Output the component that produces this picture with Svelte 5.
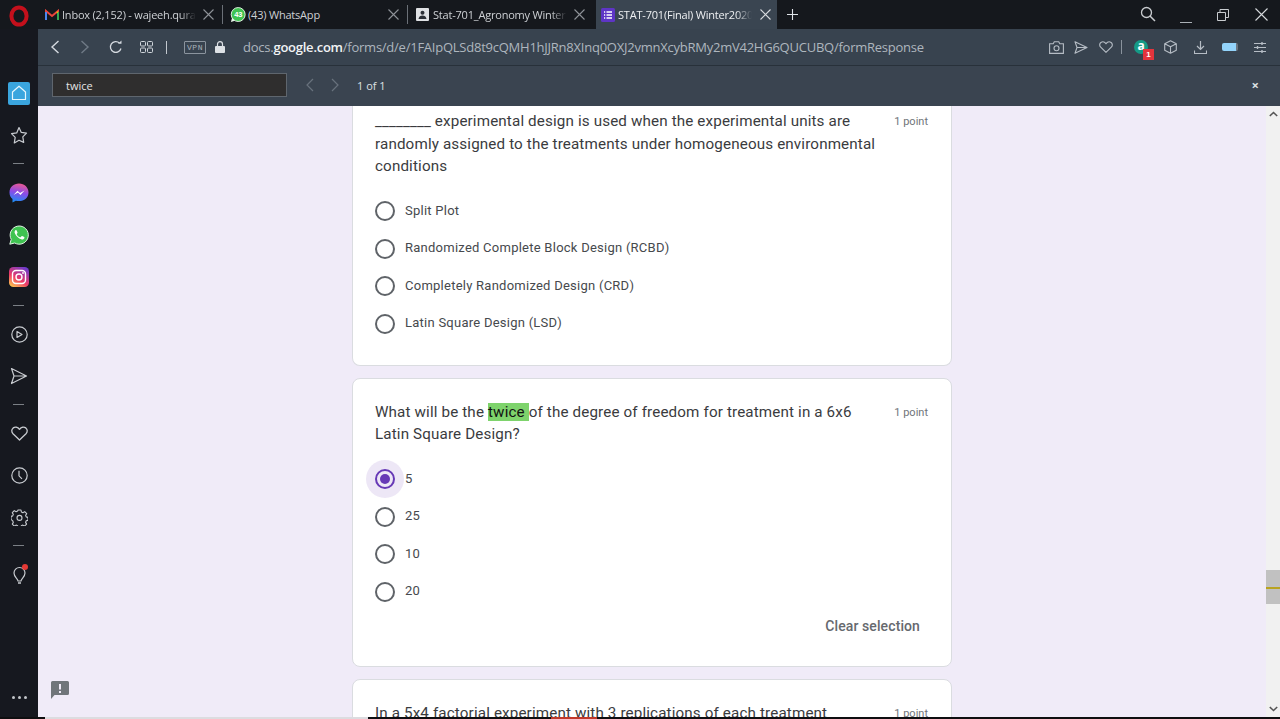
<script>
  const tabs = [
    { id: "gmail", title: "Inbox (2,152) - wajeeh.qura" },
    { id: "wa", title: "(43) WhatsApp", full: true },
    { id: "drive", title: "Stat-701_Agronomy Winter" },
    { id: "form", title: "STAT-701(Final) Winter2020", active: true },
  ];

  const questions = [
    {
      parts: ["________ experimental design is used when the experimental units are randomly assigned to the treatments under homogeneous environmental conditions"],
      options: [
        "Split Plot",
        "Randomized Complete Block Design (RCBD)",
        "Completely Randomized Design (CRD)",
        "Latin Square Design (LSD)",
      ],
      first: true,
    },
    {
      parts: ["What will be the ", "twice ", "of the degree of freedom for treatment in a 6x6 Latin Square Design?"],
      options: ["5", "25", "10", "20"],
      selected: 0,
    },
    {
      parts: ["In a 5x4 factorial experiment with 3 replications of each treatment"],
      options: [],
    },
  ];
</script>

<div class="browser">
  <header class="tabstrip">
    <div class="logo">
      <svg width="20" height="22" viewBox="0 0 20 22"><ellipse cx="10" cy="11" rx="7.6" ry="8.6" fill="none" stroke="#c4101c" stroke-width="4"/></svg>
    </div>
    {#each tabs as tab}
      <div class="tab {tab.id}" class:active={tab.active}>
        <span class="favicon">
          {#if tab.id === "gmail"}
            <svg width="14" height="12" viewBox="0 0 14 12"><path d="M1 11V2l6 5 6-5v9" fill="none" stroke="#e8453c" stroke-width="2"/><path d="M1 11V3" stroke="#4a87f0" stroke-width="2"/><path d="M13 11V3" stroke="#34a853" stroke-width="2"/><path d="M11 3.500 13 2v2z" fill="#fbbc04"/></svg>
          {:else if tab.id === "wa"}
            <svg width="16" height="16" viewBox="0 0 17 17"><circle cx="8.700" cy="8" r="7.400" fill="#3fc351" stroke="#e8f5e9" stroke-width="1"/><path d="M1 16l1.200-4.500 3 3z" fill="#e8f5e9"/><text x="8.700" y="10.600" text-anchor="middle" class="wa-count">43</text></svg>
          {:else if tab.id === "drive"}
            <svg width="13" height="13" viewBox="0 0 13 13"><rect width="13" height="13" rx="1" fill="#dfe1e4"/><circle cx="6.500" cy="4.800" r="2" fill="#2b2f36"/><path d="M2.500 11c.3-2.600 2-3.600 4-3.600s3.700 1 4 3.600z" fill="#2b2f36"/></svg>
          {:else}
            <svg width="14" height="14" viewBox="0 0 14 14"><rect width="14" height="14" rx="1.500" fill="#5e35c5"/><path d="M3 4h1.200M5.500 4H11M3 7h1.200M5.500 7H11M3 10h1.200M5.500 10H11" stroke="#fff" stroke-width="1.400"/></svg>
          {/if}
        </span>
        <span class="tab-title" class:full={tab.full}>{tab.title}</span>
        <svg class="tab-x" width="11" height="11" viewBox="0 0 11 11"><path d="M.5.5l10 10M10.500.5l-10 10" stroke="currentColor" stroke-width="1.100"/></svg>
      </div>
    {/each}
    <svg class="plus" width="11" height="11" viewBox="0 0 11 11"><path d="M5.500 0v11M0 5.500h11" stroke="#dfe3e8" stroke-width="1.100"/></svg>
    <div class="win-controls">
      <svg class="win-search" width="16" height="16" viewBox="0 0 16 16"><circle cx="6.500" cy="6.500" r="5" fill="none" stroke="#c9ccd0" stroke-width="1.300"/><path d="M10 10l5 5" stroke="#c9ccd0" stroke-width="1.500"/></svg>
      <svg class="win-min" width="12" height="12" viewBox="0 0 12 12"><path d="M0 11.500h12" stroke="#aab0b6"/></svg>
      <svg class="win-max" width="12" height="12" viewBox="0 0 12 12"><path d="M.5 3.500h8v8h-8zM3 3.500V.5h8.500v8h-3" fill="none" stroke="#c9ccd0"/></svg>
      <svg class="win-close" width="13" height="13" viewBox="0 0 13 13"><path d="M.5.5l12 12M12.500.5l-12 12" stroke="#d5d8dc" stroke-width="1.100"/></svg>
    </div>
  </header>

  <nav class="sidebar">
    <div class="side-item">
      <span class="home">
        <svg width="16" height="16" viewBox="0 0 16 16"><path d="M1.500 7L8 1.200 14.500 7v7.500h-13z" fill="none" stroke="#e6f6fd" stroke-width="1.200" stroke-linejoin="round"/></svg>
      </span>
    </div>
    <div class="side-item">
      <svg width="18" height="18" viewBox="0 0 18 18"><path d="M9 1.500l2.300 4.900 5.200.7-3.700 3.800.9 5.500L9 14.200l-4.700 2.700.9-5.500-3.700-3.800 5.200-.7z" fill="none" stroke="#c8cbd0" stroke-width="1.200" stroke-linejoin="round"/></svg>
    </div>
    <div class="side-dash wide"></div>
    <div class="side-item">
      <svg width="20" height="20" viewBox="0 0 20 20">
        <defs><linearGradient id="msg" x1="0.500" y1="1" x2="0.700" y2="0"><stop offset="0" stop-color="#1f8cf5"/><stop offset="0.500" stop-color="#8a4be8"/><stop offset="1" stop-color="#ee5a8e"/></linearGradient></defs>
        <path d="M10 .5C4.600.5.500 4.300.500 9.400c0 2.700 1.100 5 3 6.500v3.600l3.300-1.800c1 .3 2.100.4 3.200.4 5.400 0 9.500-3.800 9.500-8.700S15.400.5 10 .5z" fill="url(#msg)"/>
        <path d="M4.500 12l4-4.300 2.500 2.300 4.500-2.400-4 4.300-2.500-2.300z" fill="#fff"/>
      </svg>
    </div>
    <div class="side-item">
      <svg width="20" height="20" viewBox="0 0 20 20">
        <path d="M.8 19.200l1.400-4.800A9.100 9.100 0 1 1 5.700 18z" fill="#3fc351" stroke="#dff3e2" stroke-width="1"/>
        <path d="M6.900 4.900c-.7.300-1.500 1.300-1.300 2.700.3 2 3.900 6.500 7.300 6.900 1.300.1 2.300-.8 2.500-1.600.1-.5 0-.8-.2-.9l-2-1c-.3-.1-.5 0-.7.200l-.8 1c-.2.200-.4.200-.7.100-1.300-.5-2.500-1.600-3.200-2.900-.1-.3-.1-.4.100-.6l.6-.8c.1-.2.100-.4 0-.6l-.8-1.900c-.2-.4-.5-.6-.8-.6z" fill="#fff"/>
      </svg>
    </div>
    <div class="side-item">
      <svg width="20" height="20" viewBox="0 0 20 20">
        <defs><linearGradient id="ig" x1="0.200" y1="1" x2="0.800" y2="0"><stop offset="0" stop-color="#fdc150"/><stop offset="0.400" stop-color="#ee3a67"/><stop offset="1" stop-color="#6a3bd0"/></linearGradient></defs>
        <rect width="20" height="20" rx="4.500" fill="url(#ig)"/>
        <rect x="3.500" y="3.500" width="13" height="13" rx="3.500" fill="none" stroke="#fff" stroke-width="1.400"/>
        <circle cx="10" cy="10" r="3" fill="none" stroke="#fff" stroke-width="1.400"/>
        <circle cx="14" cy="6" r=".9" fill="#fff"/>
      </svg>
    </div>
    <div class="side-dash"></div>
    <div class="side-item">
      <svg width="17" height="17" viewBox="0 0 17 17"><circle cx="8.500" cy="8.500" r="7.700" fill="none" stroke="#c8cbd0" stroke-width="1.200"/><path d="M6 5.500v6l5-3z" fill="none" stroke="#c8cbd0" stroke-width="1.200" stroke-linejoin="round"/></svg>
    </div>
    <div class="side-item">
      <svg width="18" height="18" viewBox="0 0 18 18"><path d="M1.500 1.500L16.500 9 1.500 16.500 4 9zM4 9h12" fill="none" stroke="#c8cbd0" stroke-width="1.200" stroke-linejoin="round"/></svg>
    </div>
    <div class="side-dash"></div>
    <div class="side-item">
      <svg width="17" height="15" viewBox="0 0 17 15"><path d="M8.500 14L2 7.700C.2 5.800.5 3.200 2.200 1.900c1.800-1.300 4.500-1 6.300 1.400 1.800-2.400 4.500-2.700 6.300-1.400 1.700 1.300 2 3.900.2 5.800z" fill="none" stroke="#c8cbd0" stroke-width="1.300" stroke-linejoin="round"/></svg>
    </div>
    <div class="side-item">
      <svg width="17" height="17" viewBox="0 0 17 17"><circle cx="8.500" cy="8.500" r="7.700" fill="none" stroke="#c8cbd0" stroke-width="1.200"/><path d="M8 3.800v5l3 3" fill="none" stroke="#c8cbd0" stroke-width="1.200"/></svg>
    </div>
    <div class="side-item">
      <svg width="17" height="17" viewBox="0 0 17 17"><path d="M7 1h3l.4 2 1.500.7 1.800-1.100 2 2.100-1.100 1.700.6 1.500 1.800.5v3l-1.800.4-.6 1.600 1 1.700-2 2-1.700-1-1.600.6-.4 1.900H7l-.4-1.900-1.600-.6-1.700 1-2-2 1-1.700-.6-1.600L0 10.400v-3l1.700-.5.600-1.500-1-1.700 2-2.100 1.800 1.100 1.500-.7z" fill="none" stroke="#c8cbd0" stroke-width="1.100" stroke-linejoin="round"/><circle cx="8.500" cy="8.900" r="2.500" fill="none" stroke="#c8cbd0" stroke-width="1.100"/></svg>
    </div>
    <div class="side-dash wide"></div>
    <div class="side-item">
      <svg class="bulb" width="18" height="22" viewBox="0 0 18 22"><path d="M7 18c-.3-2.500-4-4-4-8a5.500 5.500 0 0 1 11 0c0 4-3.700 5.500-4 8z" fill="none" stroke="#c8cbd0" stroke-width="1.200"/><path d="M7 20h3" stroke="#c8cbd0" stroke-width="1.500"/><circle cx="14" cy="4" r="3" fill="#e53935"/></svg>
    </div>
    <div class="side-more">
      <span></span><span></span><span></span>
    </div>
  </nav>

  <div class="toolbar">
    <button class="tool" aria-label="Back"><svg width="10" height="14" viewBox="0 0 10 14"><path d="M8.500 1L2 7l6.500 6" fill="none" stroke="#d5dae0" stroke-width="1.400"/></svg></button>
    <button class="tool dim" aria-label="Forward"><svg width="10" height="14" viewBox="0 0 10 14"><path d="M1.500 1L8 7l-6.500 6" fill="none" stroke="#6f7a86" stroke-width="1.400"/></svg></button>
    <button class="tool reload" aria-label="Reload"><svg width="14" height="14" viewBox="0 0 14 14"><path d="M12 8.500A5.400 5.400 0 1 1 10.500 3" fill="none" stroke="#d5dae0" stroke-width="1.300"/><path d="M9 3.800h3.500V.5z" fill="#d5dae0"/></svg></button>
    <button class="tool" aria-label="Tabs"><svg width="13" height="12" viewBox="0 0 13 12"><g fill="none" stroke="#cfd4da"><rect x=".5" y=".5" width="5" height="4.500" rx="1"/><rect x="7.500" y=".5" width="5" height="4.500" rx="1"/><rect x=".5" y="7" width="5" height="4.500" rx="1"/><rect x="7.500" y="7" width="5" height="4.500" rx="1"/></g></svg></button>
    <span class="tool-sep"></span>
    <span class="vpn">VPN</span>
    <svg class="lock" width="10" height="12" viewBox="0 0 10 12"><path d="M2.500 5.500V3.200a2.500 2.500 0 0 1 5 0v2.300" fill="none" stroke="#dde1e5" stroke-width="1.200"/><rect y="5" width="10" height="7" rx="1" fill="#dde1e5"/></svg>
    <div class="url"><span>docs.</span><b>google.com</b><span>/forms/d/e/1FAIpQLSd8t9cQMH1hJJRn8XInq0OXJ2vmnXcybRMy2mV42HG6QUCUBQ/formResponse</span></div>
    <div class="tool-right">
      <svg width="15" height="13" viewBox="0 0 15 13"><path d="M.6 2.800h3.600L5.300.7h4.400l1.100 2.100h3.600v9.600H.6z" fill="none" stroke="#b6bdc5" stroke-width="1.100"/><circle cx="7.500" cy="7.300" r="2.500" fill="none" stroke="#b6bdc5" stroke-width="1.100"/></svg>
      <svg width="14" height="13" viewBox="0 0 14 13"><path d="M1 .8l12 5.700L1 12.200l2-5.700zM3 6.500h10" fill="none" stroke="#b6bdc5" stroke-width="1.100" stroke-linejoin="round"/></svg>
      <svg class="ic-heart" width="14" height="12" viewBox="0 0 14 12"><path d="M7 11.300L1.700 6.200C.2 4.700.5 2.500 1.900 1.500 3.300.5 5.500.7 7 2.700c1.500-2 3.700-2.200 5.100-1.200 1.400 1 1.700 3.200.2 4.700z" fill="none" stroke="#b6bdc5" stroke-width="1.100"/></svg>
      <span class="tool-sep narrow"></span>
      <span class="ext"><span class="ext-a">a</span><span class="ext-badge">1</span></span>
      <svg class="ic-cube" width="13" height="14" viewBox="0 0 13 14"><path d="M6.500.7l5.800 3v6.600l-5.800 3-5.800-3V3.700zM.7 3.700l5.800 3 5.800-3M6.500 6.700v6.600" fill="none" stroke="#b6bdc5" stroke-width="1.100" stroke-linejoin="round"/></svg>
      <svg class="ic-dl" width="13" height="13" viewBox="0 0 13 13"><path d="M6.500 0v8M3 5l3.500 3.500L10 5" fill="none" stroke="#b6bdc5" stroke-width="1.200"/><path d="M.5 9.500v3h12v-3" fill="none" stroke="#b6bdc5" stroke-width="1.100"/></svg>
      <span class="battery"></span>
      <svg class="ic-sliders" width="12" height="11" viewBox="0 0 12 11"><path d="M0 1.500h12M0 5.500h12M0 9.500h12" stroke="#b6bdc5"/><path d="M8 0v3M3.500 4v3M8 8v3" stroke="#b6bdc5" stroke-width="1.400"/></svg>
    </div>
  </div>

  <div class="findbar">
    <div class="find-input">twice</div>
    <svg class="find-prev" width="9" height="14" viewBox="0 0 9 14"><path d="M8 1L2 7l6 6" fill="none" stroke="#68727d" stroke-width="1.200"/></svg>
    <svg class="find-next" width="9" height="14" viewBox="0 0 9 14"><path d="M1 1l6 6-6 6" fill="none" stroke="#68727d" stroke-width="1.200"/></svg>
    <span class="find-count">1 of 1</span>
    <span class="find-close">×</span>
  </div>

  <main class="page">
    <div class="page-scroll">
      {#each questions as q}
        <section class="card" class:first={q.first}>
          <div class="q-head">
            <p class="q-text">
              {#each q.parts as part, i}
                {#if q.parts.length > 1 && i === 1}<mark>{part}</mark>{:else}{part}{/if}
              {/each}
            </p>
            <span class="q-points">1 point</span>
          </div>
          {#if q.options.length}
            <div class="options">
              {#each q.options as opt, i}
                <div class="option" class:checked={q.selected === i}>
                  <span class="radio"><span class="dot"></span></span>
                  <span class="opt-label">{opt}</span>
                </div>
              {/each}
            </div>
          {/if}
          {#if q.selected !== undefined}
            <div class="clear">Clear selection</div>
          {/if}
        </section>
      {/each}
      <span class="report" aria-hidden="true">
        <svg width="18" height="18" viewBox="0 0 18 18"><path d="M1.500 0h15A1.500 1.500 0 0 1 18 1.500v11a1.500 1.500 0 0 1-1.500 1.500H3.500L0 18V1.500A1.500 1.500 0 0 1 1.500 0z" fill="#70757a"/><rect x="8" y="3" width="2" height="5.500" fill="#f0ebf8"/><rect x="8" y="10" width="2" height="2" fill="#f0ebf8"/></svg>
      </span>
    </div>
    <div class="scrollbar">
      <svg width="9" height="6" viewBox="0 0 9 6"><path d="M.8 5L4.500 1.500 8.200 5" fill="none" stroke="#555" stroke-width="1.600"/></svg>
      <div class="track"><div class="thumb"><span class="find-mark"></span></div></div>
      <svg width="9" height="6" viewBox="0 0 9 6"><path d="M.8 1L4.500 4.500 8.200 1" fill="none" stroke="#555" stroke-width="1.600"/></svg>
    </div>
  </main>

  <div class="taskbar-edge">
    <span class="seg-a"></span><span class="seg-gap"></span><span class="seg-b"></span><span class="seg-red"></span><span class="seg-c"></span>
  </div>
</div>

<style>
  :global(body) {
    margin: 0;
    background: #16181f;
    overflow: hidden;
  }
  .browser {
    display: grid;
    grid-template-columns: 38px 1fr;
    grid-template-rows: 29px 37px 40px 611px 2px;
    width: 1280px;
    height: 719px;
    overflow: hidden;
    font-family: "Open Sans", "Liberation Sans", sans-serif;
  }

  .tabstrip {
    grid-column: 1 / 3;
    display: flex;
    align-items: center;
    background: #15181d;
    color: #cdd0d4;
    font-size: 11px;
    letter-spacing: -0.2px;
    position: relative;
  }
  .logo {
    flex: 0 0 38px;
    display: flex;
    justify-content: center;
    padding-top: 3px;
  }
  .tab {
    flex: 0 0 185px;
    height: 29px;
    box-sizing: border-box;
    display: flex;
    align-items: center;
    padding-left: 7px;
    position: relative;
    background-clip: padding-box;
  }
  .tab::after {
    content: "";
    position: absolute;
    right: 0;
    top: 5px;
    bottom: 5px;
    width: 1px;
    background: #6b7077;
  }
  .tab.drive {
    flex-basis: 188px;
    padding-left: 8px;
  }
  .tab.drive::after,
  .tab.active::after {
    display: none;
  }
  .tab.active {
    flex-basis: 181px;
    background: #3a4551;
    color: #eef0f2;
    padding-left: 5px;
  }
  .favicon {
    display: flex;
    flex: 0 0 auto;
    margin-right: 3px;
  }
  .wa .favicon {
    margin-right: 2px;
  }
  .drive .favicon {
    margin-right: 4px;
  }
  .tab-title {
    width: 134px;
    white-space: nowrap;
    overflow: hidden;
    -webkit-mask-image: linear-gradient(90deg, #000 88%, transparent);
    mask-image: linear-gradient(90deg, #000 88%, transparent);
  }
  .tab-title.full {
    -webkit-mask-image: none;
    mask-image: none;
  }
  .tab-x {
    position: absolute;
    right: 9px;
    top: 9px;
    color: #8e9298;
  }
  .tab.drive .tab-x {
    right: 11px;
  }
  .tab.active .tab-x {
    right: 6.5px;
    color: #d8dbdf;
  }
  .plus {
    margin-left: 10px;
  }
  .win-controls {
    margin-left: auto;
    display: flex;
    align-items: center;
    height: 29px;
    padding-right: 12px;
  }
  .win-search {
    margin-right: 24px;
    margin-top: -2px;
  }
  .win-min {
    margin-right: 25px;
    margin-top: 4px;
  }
  .win-max {
    margin-right: 26px;
  }

  .sidebar {
    grid-row: 2 / 5;
    display: flex;
    flex-direction: column;
    align-items: center;
    padding-top: 43px;
    background: #16181f;
  }
  .side-item {
    flex: 0 0 42px;
    display: flex;
    align-items: center;
    justify-content: center;
    width: 100%;
  }
  .home {
    width: 22px;
    height: 23px;
    border-radius: 2px;
    background: #3aa5de;
    display: flex;
    align-items: center;
    justify-content: center;
  }
  .side-dash {
    flex: 0 0 15px;
    width: 100%;
    position: relative;
  }
  .side-dash.wide {
    flex-basis: 16px;
  }
  .side-dash::before {
    content: "";
    position: absolute;
    left: 13px;
    top: 7px;
    width: 11px;
    height: 1px;
    background: #7b7f85;
  }
  .bulb {
    margin-left: 2px;
    margin-top: -2px;
  }
  .side-more {
    margin-top: auto;
    margin-bottom: 18px;
    display: flex;
    gap: 3px;
  }
  .side-more span {
    width: 3px;
    height: 3px;
    border-radius: 50%;
    background: #c2c5ca;
  }

  .toolbar {
    display: flex;
    align-items: center;
    height: 36px;
    padding-left: 2px;
    background: #38434f;
    border-bottom: 1px solid #28313a;
    color: #b4bbc3;
  }
  .tool {
    flex: 0 0 30px;
    height: 30px;
    padding: 0;
    border: none;
    background: none;
    display: flex;
    align-items: center;
    justify-content: center;
  }
  .tool.reload {
    margin-left: 1px;
  }
  .tool-sep {
    width: 1px;
    height: 13px;
    background: #c2c8ce;
    margin: 0 17px 0 5px;
  }
  .tool-sep.narrow {
    height: 14px;
    margin: 0 0 0 -2px;
    background: #8a939d;
  }
  .vpn {
    box-sizing: border-box;
    width: 22px;
    height: 13px;
    border: 1px solid #8b949e;
    border-radius: 1px;
    font: 8px/11px "Liberation Mono", monospace;
    color: #aab2ba;
    text-align: center;
    letter-spacing: 0.5px;
  }
  .lock {
    margin-left: 9px;
  }
  .url {
    margin-left: 18px;
    margin-top: -1px;
    font-size: 13px;
    color: #aeb6be;
    white-space: nowrap;
    letter-spacing: -0.24px;
  }
  .url b {
    font-weight: 600;
    color: #f1f3f5;
  }
  .tool-right {
    margin-left: auto;
    display: flex;
    align-items: center;
    gap: 10px;
    padding-right: 14px;
  }
  .ic-heart {
    margin-left: 1px;
  }
  .ext {
    position: relative;
    width: 14px;
    height: 14px;
    margin-left: 2px;
    border-radius: 50%;
    background: #159a86;
    display: flex;
    align-items: center;
    justify-content: center;
    font: 700 12px/14px "Open Sans", sans-serif;
    color: #fff;
  }
  .ext-a {
    margin-top: -2px;
  }
  .ext-badge {
    position: absolute;
    left: 9px;
    top: 9px;
    width: 11px;
    height: 11px;
    background: #e2343c;
    color: #fff;
    font: 700 8px/11px "Liberation Sans", sans-serif;
    text-align: center;
  }
  .ic-cube {
    margin-left: 5.5px;
  }
  .ic-dl {
    margin-left: 7px;
  }
  .battery {
    width: 14px;
    height: 8px;
    margin-left: 5.5px;
    border-radius: 2px;
    background: #93d4fb;
    border-right: 2px solid #6b7580;
  }
  .ic-sliders {
    margin-left: 6px;
  }

  .findbar {
    display: flex;
    align-items: center;
    padding: 0 0 2px 14px;
    box-sizing: border-box;
    background: #3a4450;
    color: #dde0e3;
    font-size: 11px;
    position: relative;
  }
  .find-input {
    box-sizing: border-box;
    width: 235px;
    height: 24px;
    padding: 0 13px;
    line-height: 23px;
    background: #2f2e2e;
    border: 1px solid #5f666e;
    color: #e4e4e4;
  }
  .find-prev {
    margin-left: 18px;
  }
  .find-next {
    margin-left: 17px;
  }
  .find-count {
    margin-left: 17px;
  }
  .find-close {
    margin-left: auto;
    margin-right: 21px;
    font-size: 13px;
    font-weight: 700;
  }

  .page {
    display: flex;
    background: #f0ebf8;
    min-height: 0;
    overflow: hidden;
  }
  .page-scroll {
    flex: 1;
    position: relative;
    display: flex;
    flex-direction: column;
    align-items: center;
    gap: 12px;
    overflow: hidden;
    font-family: Roboto, "Liberation Sans", sans-serif;
  }
  .card {
    flex: none;
    box-sizing: border-box;
    width: 600px;
    padding: 22px 23px 22px 22px;
    background: #fff;
    border: 1px solid #dadce0;
    border-radius: 8px;
  }
  .card.first {
    border-top: none;
    border-radius: 0 0 8px 8px;
    padding-top: 4px;
    padding-bottom: 22px;
  }
  .q-head {
    display: flex;
    justify-content: space-between;
    gap: 10px;
  }
  .q-text {
    margin: 0;
    width: 505px;
    font-size: 15.2px;
    line-height: 22.5px;
    letter-spacing: 0.14px;
    color: #3a3b3e;
  }
  mark {
    background: #7ed36c;
    color: #111;
  }
  .q-points {
    font-size: 11px;
    line-height: 24px;
    color: #70757a;
    white-space: nowrap;
  }
  .options {
    margin-top: 15px;
  }
  .option {
    display: flex;
    align-items: center;
    gap: 10px;
    height: 37.5px;
    font-size: 13px;
    letter-spacing: 0.25px;
    color: #46494d;
  }
  .opt-label {
    margin-top: -2px;
  }
  .radio {
    box-sizing: border-box;
    width: 20px;
    height: 20px;
    border: 2px solid #5f6368;
    border-radius: 50%;
    display: flex;
    align-items: center;
    justify-content: center;
    position: relative;
  }
  .dot {
    display: none;
    width: 10px;
    height: 10px;
    border-radius: 50%;
    background: #673ab7;
  }
  .checked .radio {
    border-color: #673ab7;
  }
  .checked .dot {
    display: block;
  }
  .checked .radio::before {
    content: "";
    position: absolute;
    inset: -11px;
    border-radius: 50%;
    background: #673ab7;
    opacity: 0.12;
  }
  .clear {
    height: 33px;
    padding-right: 8px;
    text-align: right;
    font-size: 14px;
    font-weight: 500;
    line-height: 31px;
    letter-spacing: 0.1px;
    color: #66696e;
  }
  .report {
    position: absolute;
    left: 13px;
    top: 575px;
    display: flex;
  }

  .scrollbar {
    flex: 0 0 14px;
    display: flex;
    flex-direction: column;
    align-items: center;
    padding: 5px 0;
    box-sizing: border-box;
    background: #f1f1f1;
  }
  .track {
    flex: 1;
    width: 100%;
    position: relative;
  }
  .thumb {
    position: absolute;
    top: 453px;
    width: 100%;
    height: 34px;
    background: #c1c1c1;
  }
  .find-mark {
    position: absolute;
    top: 17px;
    left: 0;
    width: 100%;
    height: 2px;
    background: #b9a320;
  }

  .taskbar-edge {
    grid-column: 1 / 3;
    display: flex;
    height: 2px;
    background: #0e0e10;
  }
  .seg-a {
    flex: 0 0 45px;
  }
  .seg-gap {
    flex: 0 0 323px;
    background: #dcdce0;
  }
  .seg-b {
    flex: 0 0 183px;
  }
  .seg-red {
    flex: 0 0 46px;
    background: #c0392b;
  }
  .seg-c {
    flex: 1;
  }

  .wa-count {
    font: 700 8px "Liberation Sans", sans-serif;
    fill: #fff;
  }
</style>
